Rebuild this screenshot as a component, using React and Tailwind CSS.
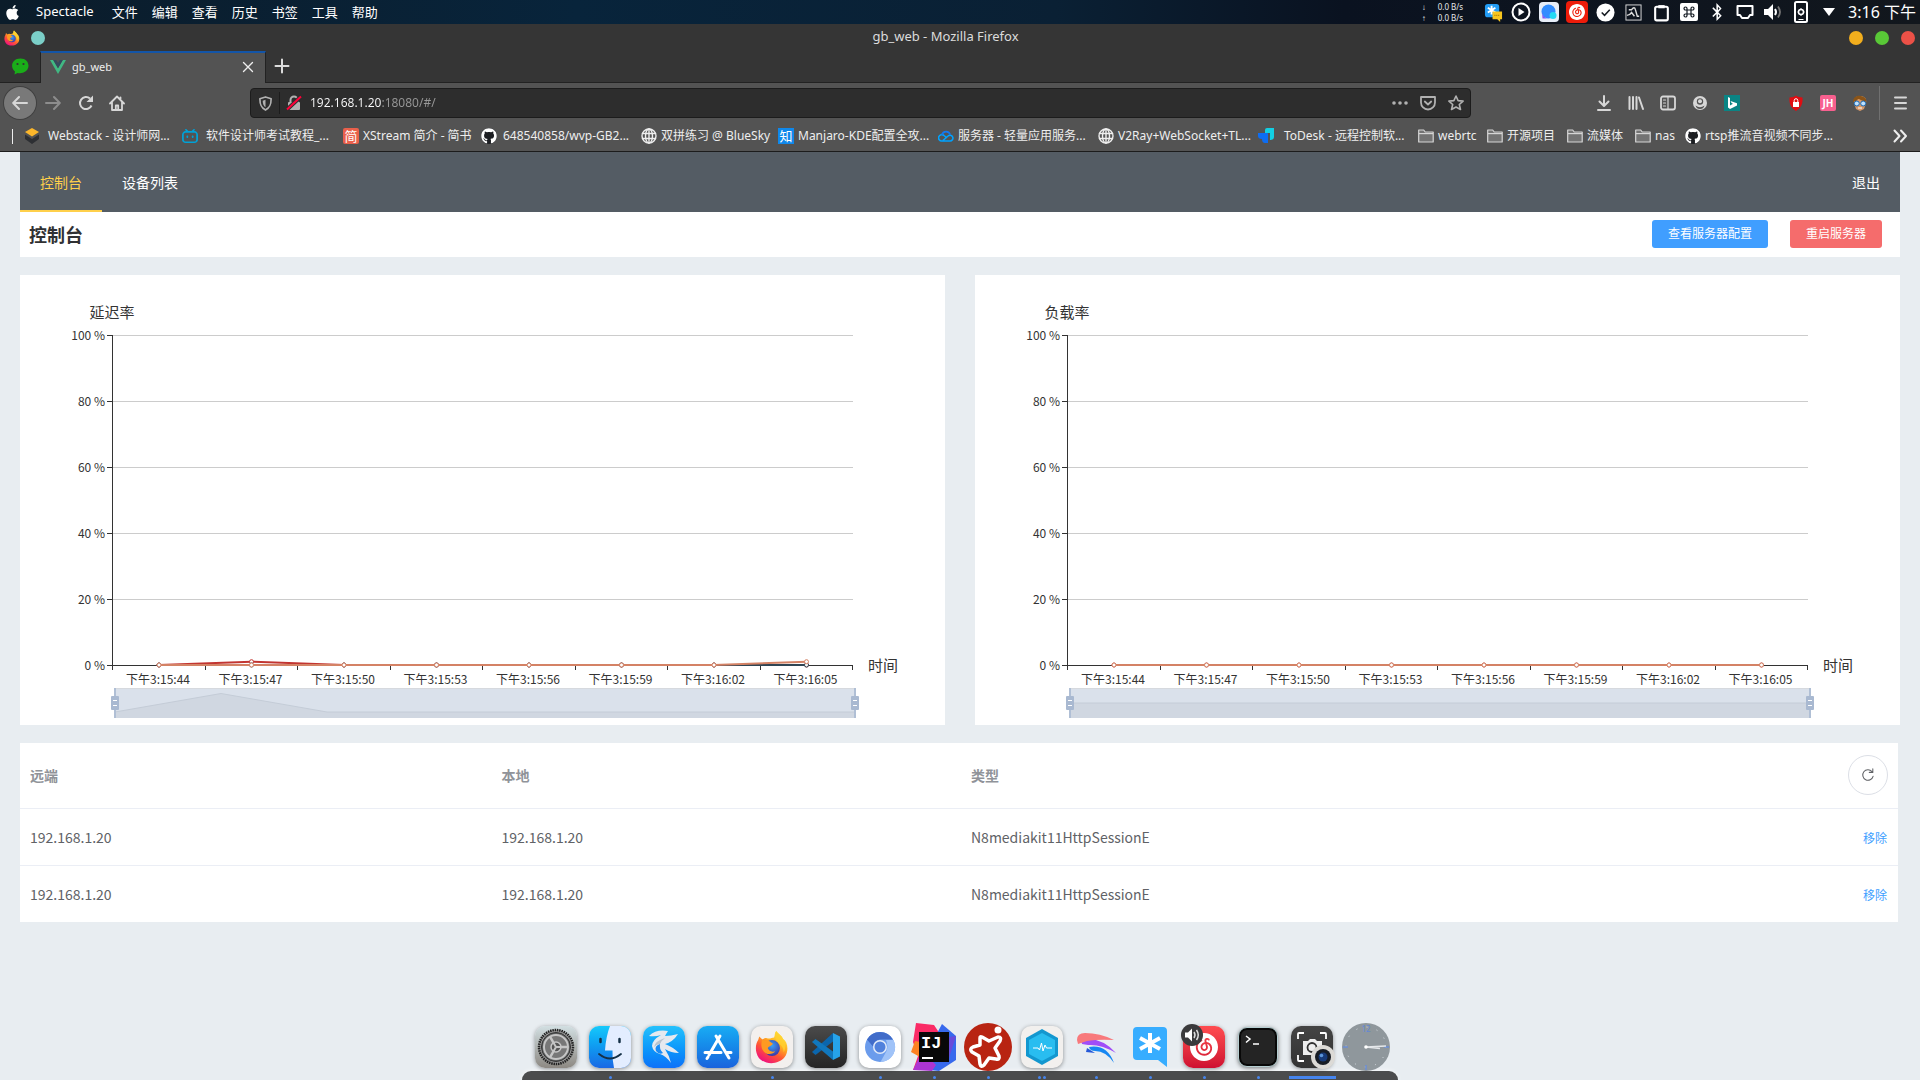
import React from "react";
import { FaApple, FaGithub, FaBluetoothB } from "react-icons/fa";
import { SiNeteasecloudmusic, SiBilibili } from "react-icons/si";

const UI = "font-['Noto_Sans','Noto_Sans_CJK_SC',sans-serif]";
const PAGE = "font-['Noto_Sans_CJK_SC','Noto_Sans',sans-serif]";

function Firefox({ className }) {
  return (
    <svg viewBox="0 0 32 32" className={className} aria-hidden="true">
      <defs>
        <linearGradient id="ffBody" x1="0.8" y1="0.05" x2="0.25" y2="0.95">
          <stop offset="0" stopColor="#fff04a" />
          <stop offset="0.35" stopColor="#ffb020" />
          <stop offset="0.65" stopColor="#ff5634" />
          <stop offset="1" stopColor="#f0127c" />
        </linearGradient>
        <radialGradient id="ffGlobe" cx="0.5" cy="0.35" r="0.7">
          <stop offset="0" stopColor="#3aa0f5" />
          <stop offset="1" stopColor="#3b2fa0" />
        </radialGradient>
      </defs>
      <path fill="url(#ffBody)" d="M20 1c2 3 5 4 6.500 7.500C31 11 32 20 28 25.500 22 33 9 33 3.500 26 0 21 0 14 3 9.500L4 6l3 3c1-1 2-1.500 3.500-1.500C15 9 15 7 18 7c1-2 0-4 2-6z" />
      <circle cx="16" cy="17" r="7.500" fill="url(#ffGlobe)" />
      <path fill="#ff9a22" d="M7 9c2 1 4 1 6 1 1 1 3 2 4 3-1 2-4 2-5 4 1 3 4 4 7 3-2 3-8 4-11 0-3-4-2-8-1-11z" />
      <path fill="#ffcf30" d="M20 1c2 3 5 4 6.500 7.500C29 13 29 18 27 21c0-5-3-7-5-9-3-3-4-7-2-11z" opacity=".8" />
    </svg>
  );
}

function Line({ className, children, sw = 2 }) {
  return (
    <svg viewBox="0 0 16 16" className={className} fill="none" stroke="currentColor" strokeWidth={sw} strokeLinecap="round" strokeLinejoin="round" aria-hidden="true">
      {children}
    </svg>
  );
}

function Globe() {
  return (
    <Line className="size-4" sw={1.4}>
      <circle cx="8" cy="8" r="7" />
      <ellipse cx="8" cy="8" rx="3.5" ry="7" />
      <path d="M1.500 5.500h13M1.500 10.500h13M8 1v14" />
    </Line>
  );
}

function Folder() {
  return (
    <svg viewBox="0 0 16 16" className="size-4" aria-hidden="true">
      <path d="M.7 14V2h5l1.500 2h8v10z" fill="#737373" stroke="#d5d5d5" strokeWidth="1.200" strokeLinejoin="round" />
      <path d="M1 5.600h14" stroke="#d5d5d5" strokeWidth="1.200" />
    </svg>
  );
}

function Vue({ className }) {
  return (
    <svg viewBox="0 0 16 16" className={className} aria-hidden="true">
      <path fill="#41b883" d="M0 1h3.200L8 9.300 12.800 1H16L8 15z" />
      <path fill="#35495e" d="M3.200 1h3L8 4l1.800-3h3L8 9.300z" />
    </svg>
  );
}

const menus = ["文件", "编辑", "查看", "历史", "书签", "工具", "帮助"];

const tray = [
  ["translate", <svg viewBox="0 0 20 20" className="size-[19px]"><rect x="1" y="1" width="15" height="14" rx="3" fill="#229cf5" /><path d="M8 3v9M4 5l8 5M12 5l-8 5" stroke="#fff" strokeWidth="2" /><path d="M9 9h10v8h-2v3l-3-3H9z" fill="#f7c51e" /><path d="M11 13h6" stroke="#a87900" strokeDasharray="1 1" strokeWidth="1.500" /></svg>],
  ["player", <svg viewBox="0 0 20 20" className="size-5"><circle cx="10" cy="10" r="8.500" fill="none" stroke="#fff" strokeWidth="2" /><path d="M7.500 6l6 4-6 4z" fill="#fff" /></svg>],
  ["chat", <svg viewBox="0 0 20 20" className="size-5"><rect width="20" height="20" rx="4" fill="#e8eef8" /><circle cx="9.500" cy="9.500" r="7" fill="#328dff" /><path d="M3 10a7 7 0 0 0 7 6.500H3.500z" fill="#8257f5" /><circle cx="14" cy="13.500" r="3.500" fill="#25d9f4" /></svg>],
  ["music", <span className="flex size-[22px] items-center justify-center rounded bg-[#ee1c0a]"><SiNeteasecloudmusic className="size-4" /></span>],
  ["done", <svg viewBox="0 0 20 20" className="size-[19px]"><circle cx="10" cy="10" r="9.500" fill="#fff" /><path d="M6 10l3 3 5.500-6" fill="none" stroke="#161b22" strokeWidth="1.600" /></svg>],
  ["monitor", <svg viewBox="0 0 18 18" className="size-[17px]" fill="none" stroke="#ddd"><rect x="1" y="1" width="16" height="16" /><path d="M4 6h3q3-4 4 0l2 7h2M2 12q3 0 5-3l3 4" strokeWidth="1.500" /></svg>],
  ["clipboard", <svg viewBox="0 0 18 18" className="size-[19px]" fill="none" stroke="#fff" strokeWidth="2"><rect x="3" y="3.500" width="12" height="13" rx="1.500" /><path d="M6 2h6v3H6z" fill="#fff" stroke="none" /></svg>],
  ["shortcuts", <svg viewBox="0 0 18 18" className="size-[18px]"><rect width="18" height="18" rx="2" fill="#fff" /><path d="M7 7H5.500A1.500 1.500 0 1 1 7 5.500v7A1.500 1.500 0 1 1 5.500 11h7A1.500 1.500 0 1 1 11 12.500v-7A1.500 1.500 0 1 1 12.500 7z" fill="none" stroke="#111820" strokeWidth="1.200" /></svg>],
  ["bluetooth", <FaBluetoothB className="size-[18px]" />],
  ["display", <svg viewBox="0 0 18 18" className="size-[18px]" fill="none" stroke="#fff" strokeWidth="2" strokeLinejoin="round"><path d="M1.500 3h15v9h-2.500l-2 3H6l-2-3H1.500z" /></svg>],
  ["volume", <svg viewBox="0 0 18 18" className="size-[18px]"><path d="M0 6h4l5-5v16l-5-5H0z" fill="#fff" /><path d="M11 6q2 3 0 6" fill="none" stroke="#fff" strokeWidth="2" /><path d="M14 3.500q4 5.500 0 11" fill="none" stroke="#777" strokeWidth="1.800" /></svg>],
  ["device", <svg viewBox="0 0 14 22" className="h-[22px] w-[14px]" fill="none" stroke="#fff"><rect x="1" y="1" width="12" height="20" rx="1.500" strokeWidth="2" /><circle cx="7" cy="11" r="2.500" strokeWidth="1.500" /><path d="M7 7v1.500M7 13.500V15M3.500 11H5M9 11h1.500M4.500 18.500h5" /></svg>],
  ["more", <svg viewBox="0 0 12 8" className="h-[8px] w-[12px]"><path d="M0 0h12L6 8z" fill="#fff" /></svg>],
];

function MenuBar() {
  return (
    <header className="flex h-6 items-center bg-[linear-gradient(90deg,#0b1c2a,#08243b_30%,#0a2034_55%,#0a1220_70%,#12171d)] pr-1 pl-1 text-[13px] text-white">
      <FaApple className="size-[17px]" />
      <span className="ml-[15px]">Spectacle</span>
      <nav className="ml-[18px] flex gap-3.5 pt-px">
        {menus.map((m) => (
          <button key={m} className="w-[26px] whitespace-nowrap">{m}</button>
        ))}
      </nav>
      <div className="ml-auto flex items-center">
        <div className="mr-4 grid grid-cols-[16px_auto] font-['Noto_Sans'] text-[8px] leading-[11px] text-gray-200">
          <span>↓</span><span>0.0 B/s</span>
          <span>↑</span><span>0.0 B/s</span>
        </div>
        {tray.map(([name, icon]) => (
          <button key={name} aria-label={name} className="flex h-6 w-7 items-center justify-center">{icon}</button>
        ))}
        <span className="ml-[5px] text-base leading-6 whitespace-nowrap">3:16 下午</span>
      </div>
    </header>
  );
}

function TitleAndTabs() {
  return (
    <div className="bg-[#353535] text-[#dcdcdc]">
      <div className="flex h-[27px] items-center px-1">
        <div className="flex flex-1 items-center gap-[11px]">
          <Firefox className="size-4" />
          <span className="size-3.5 rounded-full bg-[#7bcfc8]" />
        </div>
        <span className="pr-7 pb-1 text-center text-[13px] leading-5">gb_web - Mozilla Firefox</span>
        <div className="flex flex-1 items-center justify-end gap-3 pr-px">
          <button aria-label="最小化" className="size-3.5 rounded-full bg-[#f2ae1d]" />
          <button aria-label="最大化" className="size-3.5 rounded-full bg-[#59c837]" />
          <button aria-label="关闭" className="size-3.5 rounded-full bg-[#ec5147]" />
        </div>
      </div>
      <div className="flex h-8 items-stretch border-b border-[#222]">
        <button aria-label="微信" className="flex w-10 items-center justify-center">
          <svg viewBox="0 0 17 17" className="size-[17px]"><path d="M8.500.5c9 0 11 11 3 14-2 .8-4 .8-6 .5l-3 1.500.5-3C-2.500 9 0 .5 8.500.5z" fill="#1aad19" /><circle cx="5.500" cy="6" r="1.100" fill="#333" /><circle cx="11.500" cy="6" r="1.100" fill="#333" /></svg>
        </button>
        <div className="-mb-px flex w-[226px] items-center border-x border-t-2 border-x-[#222] border-t-[#1355a8] bg-[#535353] pr-[11px] pb-0.5 pl-[9px] text-[11px] text-[#eee]">
          <Vue className="size-4" />
          <span className="ml-1.5 flex-1">gb_web</span>
          <button aria-label="关闭标签页"><Line className="size-3" sw={1.8}><path d="M2 2l12 12M14 2L2 14" /></Line></button>
        </div>
        <button aria-label="新标签页" className="ml-[7px] flex items-center px-px pb-0.5"><Line className="size-4" sw={2}><path d="M8 1.500v13M1.500 8h13" /></Line></button>
      </div>
    </div>
  );
}

const rightTools = [
  ["下载", <Line className="size-4"><path d="M8 1v9.500M3.500 6.500L8 11l4.500-4.500M2 15h12" /></Line>],
  ["书库", <Line className="size-4"><path d="M1.500 2v12M5 2v12M8.500 2v12M11 2.500L15 14" /></Line>],
  ["侧栏", <Line className="size-4" sw={1.8}><rect x="1" y="1.500" width="14" height="13" rx="2" /><path d="M8 2v12M3.500 5h2M3.500 8h2M3.500 11h2" strokeWidth="1.200" /></Line>],
  ["账户", <svg viewBox="0 0 16 16" className="size-4"><circle cx="8" cy="8" r="7" fill="#d7d7d7" /><circle cx="8" cy="6.500" r="3.200" fill="#535353" /><circle cx="8" cy="6.300" r="2" fill="#d7d7d7" /><path d="M3.500 10.500q4.500 3.500 9 0-1 3.500-4.500 3.500t-4.500-3.500z" fill="#535353" /></svg>],
  ["必应", <svg viewBox="0 0 16 16" className="size-4"><path fill="#0a8484" d="M0 0h16v16H0z" /><path fill="#fff" d="M4 2l2 1v7.500l3-1.700-1.500-.7L6.500 6 13 8.300v2.200L6 14l-2-1.500z" /></svg>],
  null,
  ["广告拦截", <svg viewBox="0 0 16 16" className="size-4"><path fill="#e00d12" d="M8 .5C6 2 4 2 1.500 2.500 1 9 3 13 8 16c5-3 7-7 6.500-13.500C12 2 10 2 8 .5z" /><rect x="5" y="7" width="6" height="5" fill="#fff" /><path d="M6.200 7V5.500a1.800 1.800 0 0 1 3.600 0V7" fill="none" stroke="#fff" /></svg>],
  ["JH", <span className="flex size-4 items-center justify-center rounded-xs bg-[#f8608f] text-[10px] font-bold text-white">JH</span>],
  ["用户脚本", <svg viewBox="0 0 16 16" className="size-4"><path d="M2 8C1 3 4 1 8 1s7 2 6 7l-2 6-4 2-4-2z" fill="#d99a69" /><path d="M1 7C1 2 5 0 9 1s6 3 5 6C10 6 8 4 6 4 5 6 3 6 1 7z" fill="#8a5418" /><circle cx="4.800" cy="8.500" r="2.500" fill="#bfe2ff" stroke="#1769b5" /><circle cx="11.200" cy="8.500" r="2.500" fill="#bfe2ff" stroke="#1769b5" /><path d="M6 13h4" stroke="#fff" /></svg>],
];

function Toolbar() {
  return (
    <div className="flex h-10 items-center pl-1 text-[#d7d7d7]">
      <button aria-label="后退" className="flex size-8 items-center justify-center rounded-full bg-[#797979] ring-1 ring-[#404040]"><Line className="size-4"><path d="M15 8H1.500M7 2L1.200 8 7 14" /></Line></button>
      <button aria-label="前进" className="flex w-[34px] justify-center text-[#8d8d8d]"><Line className="size-4"><path d="M1 8h13.500M9 2l5.800 6L9 14" /></Line></button>
      <button aria-label="刷新" className="flex w-[31px] justify-center"><Line className="size-4"><path d="M13.500 10.500A6 6 0 1 1 12 3.600" strokeLinecap="butt" /><path d="M15 .5V7H8.500z" fill="currentColor" stroke="none" /></Line></button>
      <button aria-label="主页" className="flex w-8 justify-center"><Line className="size-4" sw={1.8}><path d="M1 8.500L8 1.500l7 7M3 7v8h10V7M6.800 15v-4.500h2.400V15M11.500 2.500V5" /></Line></button>
      <div className="ml-[117px] flex h-[30px] w-[1221px] shrink items-center rounded border border-[#1c1c1c] bg-[#2d2d2d] text-[#b1b1b1]">
        <button aria-label="跟踪保护" className="flex w-7 justify-center"><Line className="size-[15px]" sw={1.800}><path d="M8 1L2 3c0 6 1 9.500 6 12 5-2.500 6-6 6-12z" /><path d="M8 4v8q-3-2-3-7z" fill="currentColor" stroke="none" /></Line></button>
        <span className="h-[22px] w-px bg-[#1c1c1c]" />
        <button aria-label="站点信息" className="flex w-7 justify-center">
          <svg viewBox="0 0 16 16" className="size-4"><rect x="2" y="7" width="12" height="8" rx="1" fill="#b1b1b1" /><path d="M4.500 8V5a3.500 3.500 0 0 1 7 0v3" fill="none" stroke="#b1b1b1" strokeWidth="2" /><path d="M1 14.500L15 1.500" stroke="#2d2d2d" strokeWidth="4" /><path d="M1 14.500L15 1.500" stroke="#ff0039" strokeWidth="2" /></svg>
        </button>
        <input aria-label="网址" defaultValue="192.168.1.20:18080/#/" className="ml-0.5 min-w-0 flex-1 bg-[linear-gradient(90deg,#f9f9fa_72px,#989898_72px)] bg-clip-text text-xs text-transparent outline-none" />
        <button aria-label="页面操作" className="flex w-7 justify-center"><svg viewBox="0 0 16 16" className="size-4" fill="currentColor"><circle cx="2" cy="8" r="1.800" /><circle cx="8" cy="8" r="1.800" /><circle cx="14" cy="8" r="1.800" /></svg></button>
        <button aria-label="Pocket" className="flex w-7 justify-center"><Line className="size-4" sw={1.8}><path d="M1 2h14v5.500a7 7 0 0 1-14 0zM4.800 6.500L8 9.500l3.200-3" /></Line></button>
        <button aria-label="收藏" className="flex w-7 justify-center"><Line className="size-4" sw={1.6}><path d="M8 1l2.100 4.600 5 .5-3.800 3.400 1.200 5L8 12l-4.500 2.500 1.200-5L.9 6.100l5-.5z" /></Line></button>
      </div>
      <div className="ml-auto flex items-center">
        {rightTools.map((t, i) =>
          t ? <button key={i} aria-label={t[0]} className="flex h-8 w-8 items-center justify-center">{t[1]}</button> : <span key={i} className="w-8" />
        )}
        <span className="ml-[3px] h-[34px] w-px bg-[#707070]" />
        <button aria-label="菜单" className="flex w-10 justify-center"><Line className="size-4"><path d="M3 2.500h11M3 8h11M3 13.500h11" /></Line></button>
      </div>
    </div>
  );
}

const cloud = (
  <svg viewBox="0 0 16 16" className="size-4" fill="none" strokeWidth="1.600"><path d="M5 12.500l5-4.500a2.900 2.900 0 1 1 2 5H4a3.200 3.200 0 1 1 2-5.500L9 10" stroke="#00a3ff" /><path d="M4 7a4.200 4.200 0 0 1 8.200-.2" stroke="#1478f0" /></svg>
);
const bookmarks = [
  ["w-[158px]", "gap-2", "Webstack - 设计师网...", <svg viewBox="0 0 16 16" className="size-4"><path d="M8 0l7 4-7 4.500L1 4z" fill="#fbb62b" /><path d="M1 6.500L8 11l7-4.500V11l-7 5-7-5z" fill="#2d2f33" /></svg>],
  ["w-[161px]", "gap-2", "软件设计师考试教程_...", <SiBilibili className="size-4 text-[#00a1d6]" />],
  ["w-[138px]", "gap-1", "XStream 简介 - 简书", <span className="flex size-4 items-center justify-center rounded-xs bg-[#e9604b] text-[13px] leading-4 text-white">简</span>],
  ["w-[160px]", "gap-1.5", "648540858/wvp-GB2...", <span className="flex size-4 items-center justify-center rounded-full bg-[#1c1e22]"><FaGithub className="size-4 text-white" /></span>],
  ["w-[137px]", "gap-1", "双拼练习 @ BlueSky", <Globe />],
  ["w-[160px]", "gap-1", "Manjaro-KDE配置全攻...", <span className="flex size-4 items-center justify-center bg-[#0f88eb] text-[13px] leading-4 text-white">知</span>],
  ["w-[160px]", "gap-1", "服务器 - 轻量应用服务...", cloud],
  ["w-[160px]", "gap-1", "V2Ray+WebSocket+TL...", <Globe />],
  ["w-[160px]", "gap-2.5", "ToDesk - 远程控制软...", <svg viewBox="0 0 16 16" className="size-4"><path d="M7 2q0-2 2-2h7v9q0 3-4 3V5H7z" fill="#12cfe3" /><path d="M0 5h9q1 0 1 1v9H7q-3 0-3-4-4 0-4-3z" fill="#0d6df2" /></svg>],
  ["w-[69px]", "gap-1", "webrtc", <Folder />],
  ["w-[80px]", "gap-1", "开源项目", <Folder />],
  ["w-[68px]", "gap-1", "流媒体", <Folder />],
  ["w-[50px]", "gap-1", "nas", <Folder />],
  ["w-[150px]", "gap-1", "rtsp推流音视频不同步...", <span className="flex size-4 items-center justify-center rounded-full bg-[#1c1e22]"><FaGithub className="size-4 text-white" /></span>],
];

function Bookmarks() {
  return (
    <nav className="flex h-[29px] items-center border-b border-[#1c1c1c] pb-0.5 pl-3 text-xs text-[#eee]">
      <span className="mr-[11px] h-[15px] w-px bg-[#eee]" />
      {bookmarks.map(([w, gap, label, icon]) => (
        <a key={label} href="#bookmark" className={`flex items-center whitespace-nowrap ${w} ${gap}`}>
          <span className="shrink-0">{icon}</span>
          {label}
        </a>
      ))}
      <button aria-label="更多书签" className="mr-3 ml-auto"><Line className="size-4"><path d="M2.500 2.500L7.500 8l-5 5.500M9 2.500L14 8l-5 5.500" /></Line></button>
    </nav>
  );
}

const times = ["15:44", "15:47", "15:50", "15:53", "15:56", "15:59", "16:02", "16:05"];
const xAt = (i) => 139 + i * 92.5;

function Chart({ name, series, shadow }) {
  return (
    <section className="bg-white">
      <svg viewBox="0 0 925 450" className="block w-full" role="img" aria-label={name} fill="#333">
        <text x="92" y="43" fontSize="15" textAnchor="middle">{name}</text>
        {[100, 80, 60, 40, 20, 0].map((v, i) => (
          <g key={v}>
            {v > 0 && <path d={`M93 ${60.5 + i * 66}H833`} stroke="#ccc" />}
            <path d={`M87 ${60.5 + i * 66}h6`} stroke="#333" />
            <text x="85" y={65 + i * 66} fontSize="12" textAnchor="end">{v} %</text>
          </g>
        ))}
        <path d="M92.500 60v335M92 390.500h741" stroke="#333" fill="none" />
        {times.map((t, i) => (
          <g key={t}>
            <path d={`M${Math.round(184.5 + i * 92.5) + 0.5} 390v5`} stroke="#333" />
            <text x={xAt(i) - 1} y="409" fontSize="12" textAnchor="middle">下午3:{t}</text>
          </g>
        ))}
        <text x="848" y="396" fontSize="15">时间</text>
        {series.map(([color, values]) => (
          <g key={color}>
            <polyline points={values.map((v, i) => `${xAt(i)},${390 - v * 3.3}`).join(" ")} fill="none" stroke={color} strokeWidth="2" />
            {values.map((v, i) => (
              <circle key={i} cx={xAt(i)} cy={390 - v * 3.3} r="2" fill="#fff" stroke={color} />
            ))}
          </g>
        ))}
        <rect x="95" y="413" width="740" height="30" fill="#dae1eb" />
        <path d="M95 413.500h740M95 442.500h740" stroke="#d6d9de" />
        <polygon points={`95,443 ${shadow} 835,443`} fill="#d0d7e1" />
        <polyline points={shadow} fill="none" stroke="#c4ccd7" />
        {[95, 835].map((x) => (
          <g key={x}>
            <path d={`M${x} 413v30`} stroke="#b0bfd5" strokeWidth="2" />
            <rect x={x - 4} y="421" width="8" height="14" rx="1" fill="#a9b9d1" />
            <path d={`M${x - 2} 425.500h4M${x - 2} 430.500h4`} stroke="#fff" />
          </g>
        ))}
      </svg>
    </section>
  );
}

const flat = [0, 0, 0, 0, 0, 0, 0, 0];
const rows = [1, 2];

function Page() {
  return (
    <main className={`flex-1 bg-[#e8edf1] px-5 ${PAGE}`}>
      <nav className="flex h-[60px] bg-[#545c64] text-sm text-white">
        <a href="#/" className="flex items-center border-b-2 border-[#ffd04b] px-5 pt-0.5 text-[#ffd04b]">控制台</a>
        <a href="#/devices" className="flex items-center px-5">设备列表</a>
        <a href="#/logout" className="ml-auto flex items-center px-5">退出</a>
      </nav>
      <div className="flex h-[45px] items-center bg-white pr-[18px] pb-0.5 pl-[9px]">
        <h1 className="flex-1 text-lg font-bold text-[#303133]">控制台</h1>
        <button className="h-7 rounded-[3px] bg-[#409eff] px-4 pb-0.5 text-xs text-white">查看服务器配置</button>
        <button className="ml-[22px] h-7 rounded-[3px] bg-[#f56c6c] px-4 pb-0.5 text-xs text-white">重启服务器</button>
      </div>
      <div className="my-[18px] grid grid-cols-2 gap-[30px]">
        <Chart
          name="延迟率"
          shadow="95,437 201,418.5 307,437 835,437"
          series={[["#c23531", [0, 1, 0, 0, 0, 0, 0, 0]], ["#2f4554", flat], ["#d48265", [0, 0, 0, 0, 0, 0, 0, 1]]]}
        />
        <Chart name="负载率" shadow="95,428 835,428" series={[["#c23531", flat], ["#d48265", flat]]} />
      </div>
      <div className="mr-0.5 bg-white">
        <table className="w-full table-fixed text-left text-sm text-[#606266]">
          <thead>
            <tr className="h-[65px] border-b border-[#ebeef5] text-[#909399]">
              <th className="w-1/4 px-2.5">远端</th>
              <th className="w-1/4 px-3">本地</th>
              <th className="w-1/4 px-3">类型</th>
              <th className="px-2.5 text-right">
                <button aria-label="刷新" className="inline-flex size-10 items-center justify-center rounded-full border border-[#dcdfe6] align-middle text-[#606266]">
                  <Line className="size-3.5" sw={1.200}><path d="M13.800 9.500A6 6 0 1 1 12.500 4M13.500 1v4h-4" /></Line>
                </button>
              </th>
            </tr>
          </thead>
          <tbody>
            {rows.map((r) => (
              <tr key={r} className="h-[57px] border-b border-[#ebeef5] last:border-b-0">
                <td className="px-2.5">192.168.1.20</td>
                <td className="px-3">192.168.1.20</td>
                <td className="px-3">N8mediakit11HttpSessionE</td>
                <td className="px-[11px] text-right"><button className="text-xs text-[#409eff]">移除</button></td>
              </tr>
            ))}
          </tbody>
        </table>
      </div>
    </main>
  );
}

function Tile({ className, children }) {
  return <span className={`flex size-[42px] items-center justify-center overflow-hidden rounded-[10px] shadow-[0_1px_4px_rgba(0,0,0,0.4)] ${className}`}>{children}</span>;
}

const dock = [
  ["系统设置", 0, <Tile className="bg-linear-to-b from-[#d2dfe2] to-[#8d8983]"><svg viewBox="0 0 42 42"><circle cx="21" cy="21" r="17" fill="#999" stroke="#222" strokeWidth="2.500" strokeDasharray="1.500 .8" /><circle cx="21" cy="21" r="14.500" fill="#626464" stroke="#333" /><circle cx="21" cy="21" r="12" fill="#777" stroke="#c5c5c5" strokeWidth="2" /><path d="M21 21h12M21 21l-6-10.400M21 21l-6 10.400" stroke="#c5c5c5" strokeWidth="2.500" /><circle cx="21" cy="21" r="5" fill="#555" stroke="#c5c5c5" strokeWidth="1.500" /><path d="M21 21h5M21 21l-2.500-4.300M21 21l-2.500 4.300" stroke="#c5c5c5" strokeWidth="2" /></svg></Tile>],
  ["访达", 1, <Tile className="bg-linear-to-b from-[#17c9fb] to-[#1b68e4]"><svg viewBox="0 0 42 42"><path d="M21 0h21v42H25q-2-9-1.500-17.500H16Q17 10 21 0z" fill="#e3edff" /><path d="M11.500 13v3M30.500 13v3" stroke="#153046" strokeWidth="2.500" strokeLinecap="round" /><path d="M10 28q11 9 22 0" fill="none" stroke="#153046" strokeWidth="1.800" strokeLinecap="round" /></svg></Tile>],
  ["迅雷", 0, <Tile className="bg-linear-to-b from-[#25c1fc] to-[#1071f8]"><svg viewBox="0 0 42 42"><path d="M6 10Q13 3 25 5q-2 3-3 5 6 0 13-2-5 8-13 10 8 3 14 9-8 0-14-4 4 6 6 14Q23 30 17 28q-7-2-8-8 0-6 9-11-6 2-12 1z" fill="#e5e9ef" /><path d="M22 12q-10 3-11 9 3-3 6-3 2-4 5-6z" fill="#b9c3ce" /><path d="M17 18q-6 2-4 7 3 4 7 2-4-4-3-9z" fill="#1a8bf5" /></svg></Tile>],
  ["应用商店", 0, <Tile className="bg-linear-to-b from-[#1aacf4] to-[#1b63dd]"><svg viewBox="0 0 42 42" fill="none" stroke="#fff" strokeWidth="3" strokeLinecap="round"><path d="M23 10L12 29M19 10l13 22M8 26.500h16M29 26.500h5M11 31l-1 1.500" /></svg></Tile>],
  ["Firefox", 1, <Tile className="bg-[#f3f0ee]"><Firefox className="size-[34px]" /></Tile>],
  ["VS Code", 0, <Tile className="bg-linear-to-b from-[#4b4b4b] to-[#252525]"><svg viewBox="0 0 42 42"><path d="M28 7v8.500L10.500 29 7 26z" fill="#0b66ad" /><path d="M28 34v-8.500L10.500 13 7 16z" fill="#1178be" /><path d="M28 7l7 3.500v20L28 34z" fill="#26a3ea" /></svg></Tile>],
  ["Chromium", 1, <Tile className="bg-white"><svg viewBox="0 0 42 42"><circle cx="21" cy="21" r="15" fill="#6b9cec" /><path d="M8 13.500A15 15 0 0 1 34 13.500H21q-6 1-7 7z" fill="#416cc9" /><path d="M34.500 14a15 15 0 0 1-13 22l6-11q2-5-.5-11z" fill="#a0c3f8" /><circle cx="21" cy="21" r="7" fill="#e3ebf8" /><circle cx="21" cy="21" r="5.500" fill="#5181dc" /></svg></Tile>],
  ["IntelliJ IDEA", 1, <svg viewBox="0 0 48 48" className="size-12"><path d="M6 0l18 2 8 12-9 32L3 47l5-14-5-14z" fill="#fa2b66" /><path d="M1 29l4-11 11 2-6 14z" fill="#fd8222" /><path d="M32 1l14 12v24L29 48 8 46z" fill="#3769ed" /><path d="M3 47l9-19 14 14-4 6z" fill="#ad35d3" /><path d="M46 13l-7 22-7-20z" fill="#684bd9" /><path d="M9 9h30v30H9z" fill="#080808" /><path d="M12 35h11" stroke="#fff" strokeWidth="2" /><text x="11" y="25" fill="#fff" fontSize="17" fontWeight="700" fontFamily="Liberation Mono, monospace">IJ</text></svg>],
  ["Star", 1, <svg viewBox="0 0 48 48" className="size-12"><circle cx="24" cy="24" r="24" fill="#b82412" /><path d="M18 14l7 4 9-4q4 0 2 4l-5 7 4 8q1 4-3 3l-7-1-5 7q-3 3-4-1l-1-8-7-4q-3-3 1-5l7-2 0-7q0-2 2-1z" fill="none" stroke="#fff" strokeWidth="3.500" strokeLinejoin="round" /><circle cx="34" cy="7" r="3.500" fill="#fff" /></svg>],
  ["系统监视器", 2, <Tile className="bg-[#f2f0ee]"><svg viewBox="0 0 42 42"><path d="M21 3l16 9v18l-16 9-16-9V12z" fill="#1397cf" /><path d="M21 7l13 7v14l-13 7-13-7V14z" fill="#29bdf0" /><path d="M12 22h5l1.500 2 2-7 1.500 8 2-6 1.500 3H31" fill="none" stroke="#fff" strokeWidth="1" /></svg></Tile>],
  ["Flow", 1, <svg viewBox="0 0 48 48" className="size-12"><path d="M15 25l-1 4 9 1z" fill="#2458d8" /><path d="M17 24q18-3 25 16-8-12-19-12-5 0-6-4z" fill="#1787f2" /><path d="M9 17q20-4 35 13-15-9-28-8l-6-1z" fill="#a04df8" /><path d="M5 17q0-7 8-7 15 0 29 7-15-1-27 1l-9 3z" fill="#f8797c" /></svg>],
  ["聊天", 1, <svg viewBox="0 0 48 48" className="size-12"><path d="M11 4h26q4 0 4 4v36l-9-7H11q-4 0-4-4V8q0-4 4-4z" fill="#37adff" /><path d="M24 10v20M14 15l20 11M34 15L14 26" stroke="#fff" strokeWidth="4" strokeLinecap="butt" /></svg>],
  ["网易云音乐", 1, <span className="relative"><Tile className="bg-linear-to-b from-[#ff4c50] to-[#cf0e31]"><SiNeteasecloudmusic className="size-7 text-white" /></Tile><svg viewBox="0 0 22 22" className="absolute -top-0.5 -left-0.5 size-[22px]"><circle cx="11" cy="11" r="11" fill="#3a3a3c" /><path d="M4 8.500h3l4-4v13l-4-4H4z" fill="#fff" /><path d="M13 8q2 3 0 6M15.500 6q3.500 5 0 10" fill="none" stroke="#ddd" strokeWidth="1.500" /></svg></span>],
  ["终端", 1, <span className="flex size-10 rounded-[9px] border border-[#b5ced1] bg-[#242424] p-1.5 shadow-[inset_0_0_0_2px_#080808,0_1px_4px_rgba(0,0,0,0.5)]"><svg viewBox="0 0 26 26" fill="none" stroke="#fff" strokeWidth="1.500"><path d="M1 2l4 3-4 3.500M8 10h6" /></svg></span>],
  ["Spectacle", 3, <span className="relative"><Tile className="bg-linear-to-b from-[#444] to-[#333]"><svg viewBox="0 0 42 42" fill="none" stroke="#fff" strokeWidth="1.800"><path d="M7 13V8q0-1 1-1h5M29 7h5q1 0 1 1v5M7 29v5q0 1 1 1h5" /><path d="M12 15h5l2-2h5l2 2h5v14H12z" fill="#eee" stroke="none" /><circle cx="21" cy="21.500" r="4.500" stroke="#333" /></svg></Tile><svg viewBox="0 0 24 24" className="absolute -right-0.5 -bottom-px size-6"><circle cx="12" cy="12" r="12" fill="#dcdad6" /><circle cx="12" cy="12" r="8" fill="#171c24" /><circle cx="12" cy="12" r="4.500" fill="#173a78" /><circle cx="10.500" cy="10.500" r="1.800" fill="#5c95d8" /></svg></span>],
  ["时钟", 0, <svg viewBox="0 0 48 48" className="size-12"><circle cx="24" cy="24" r="24" fill="#8f979c" /><circle cx="24" cy="24" r="20" fill="none" stroke="#dde3e8" strokeWidth="1" strokeDasharray="1 9.470" /><path d="M1 24h5M42 24h5M24 42v5" stroke="#6c8fd3" strokeWidth="1.500" /><text x="24" y="9" fill="#6288d6" fontSize="8" textAnchor="middle">12</text><path d="M24 24l14 1.500M24 24l20-1" stroke="#e5e8eb" strokeWidth="1.500" /><circle cx="24" cy="24" r="1.800" fill="#fff" /></svg>],
];

function Dock() {
  return (
    <div className="absolute inset-x-0 bottom-0 flex justify-center">
      <div className="relative flex pr-[5px] pl-[7px]">
        <div className="absolute inset-x-0 bottom-0 h-[9px] rounded-t-2xl bg-[#4b4c4d] shadow-[0_0_5px_rgba(255,255,255,0.9)]" />
        {dock.map(([label, dots, icon]) => (
          <button key={label} aria-label={label} className="relative flex w-[54px] flex-col items-center">
            <span className="flex h-12 items-center justify-center">{icon}</span>
            <span className="mt-[5px] flex h-[4px] gap-0.5">
              {dots === 3 ? (
                <span className="h-[3px] w-[47px] bg-[#4685ee]" />
              ) : (
                Array.from({ length: dots }, (_, i) => <span key={i} className="size-[3px] rounded-full bg-[#4685ee]" />)
              )}
            </span>
          </button>
        ))}
      </div>
    </div>
  );
}

export default function App() {
  return (
    <div className={`relative flex min-h-screen flex-col overflow-hidden bg-[#e8edf1] ${UI}`}>
      <MenuBar />
      <TitleAndTabs />
      <div className="bg-[#535353]">
        <Toolbar />
        <Bookmarks />
      </div>
      <Page />
      <Dock />
    </div>
  );
}
